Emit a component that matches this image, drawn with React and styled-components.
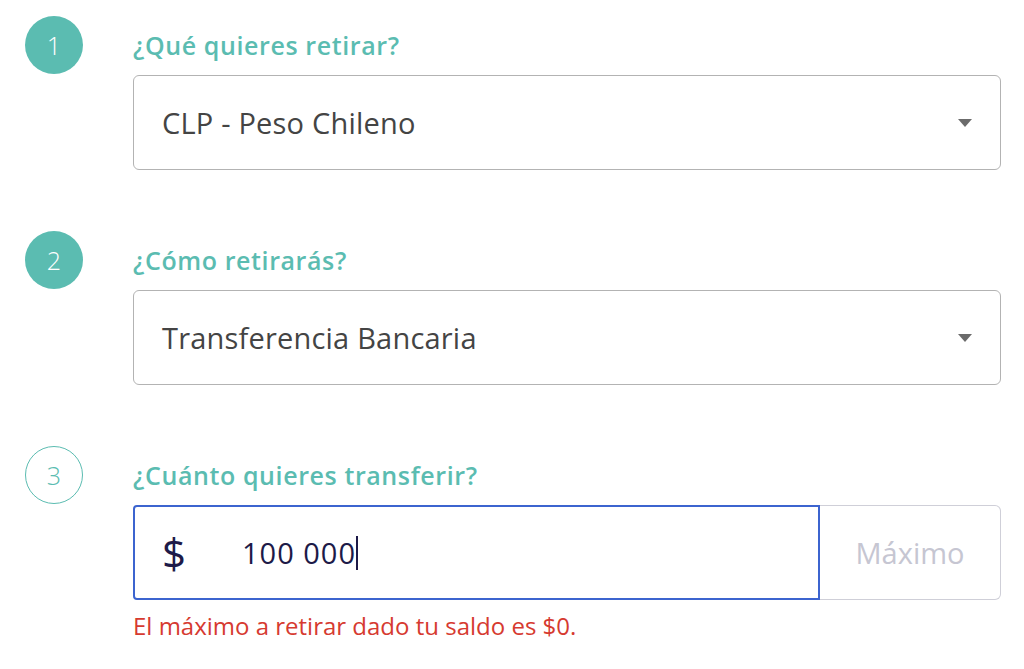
import React from 'react'
import styled, { createGlobalStyle } from 'styled-components';

const GlobalStyle = createGlobalStyle`
  body {
    margin: 0;
    background: #fff;
    font-family: "Open Sans", Lato, sans-serif;
  }
`;

const Page = styled.div`
  padding: 16px 23px 0 25px;
  display: flex;
  flex-direction: column;
  gap: 61px;
`;

const Step = styled.section`
  display: grid;
  grid-template-columns: 58px 1fr;
  column-gap: 50px;
  align-items: start;
`;

const Bullet = styled.div`
  width: 58px;
  height: 58px;
  box-sizing: border-box;
  border-radius: 50%;
  display: flex;
  align-items: center;
  justify-content: center;
  font-size: 25px;
  font-weight: 300;
  background: ${p => (p.$outline ? '#fff' : '#5bbcb1')};
  color: ${p => (p.$outline ? '#5bbcb1' : '#fff')};
  border: ${p => (p.$outline ? '1.5px solid #5bbcb1' : 'none')};
`;

const Body = styled.div`
  display: flex;
  flex-direction: column;
`;

const Label = styled.h2`
  margin: 0 0 1px;
  height: 58px;
  line-height: 58px;
  font-size: 25px;
  letter-spacing: 0.6px;
  font-weight: 600;
  color: #5bbcb1;
`;

const Select = styled.div`
  height: 95px;
  box-sizing: border-box;
  border: 1.5px solid #b3b3b3;
  border-radius: 6px;
  padding: 0 28px;
  display: flex;
  align-items: center;
  justify-content: space-between;
  font-size: 29px;
  letter-spacing: 0.2px;
  color: #444;
  cursor: pointer;
`;

const Caret = styled.span`
  width: 0;
  height: 0;
  border-left: 7px solid transparent;
  border-right: 7px solid transparent;
  border-top: 8px solid #6b6b6b;
`;

const AmountGroup = styled.div`
  display: flex;
  height: 95px;
`;

const AmountBox = styled.div`
  flex: 1;
  box-sizing: border-box;
  border: 2px solid #3c64cf;
  border-radius: 4px 0 0 4px;
  display: flex;
  align-items: center;
  padding-left: 27px;
  color: #1d1a48;
`;

const Currency = styled.span`
  width: 80px;
  font-size: 42px;
  font-weight: 400;
`;

const AmountValue = styled.span`
  font-size: 29px;
  letter-spacing: 1px;
  color: #1d1a48;
  display: flex;
  align-items: center;
`;

const TextCursor = styled.span`
  width: 2px;
  height: 34px;
  background: #1d1a48;
`;

const MaxButton = styled.button`
  width: 181px;
  box-sizing: border-box;
  border: 1.5px solid #cfcfd8;
  border-left: none;
  border-radius: 0 6px 6px 0;
  background: #fff;
  font-family: inherit;
  font-size: 29px;
  color: #c6c6d2;
  cursor: pointer;
`;

const ErrorText = styled.p`
  margin: 12px 0 0;
  font-size: 24px;
  line-height: 28px;
  color: #d63a30;
`;

export default function App() {
  return (
    <>
      <GlobalStyle />
      <Page>
        <Step>
          <Bullet>1</Bullet>
          <Body>
            <Label>¿Qué quieres retirar?</Label>
            <Select>
              CLP - Peso Chileno
              <Caret />
            </Select>
          </Body>
        </Step>
        <Step>
          <Bullet>2</Bullet>
          <Body>
            <Label>¿Cómo retirarás?</Label>
            <Select>
              Transferencia Bancaria
              <Caret />
            </Select>
          </Body>
        </Step>
        <Step>
          <Bullet $outline>3</Bullet>
          <Body>
            <Label>¿Cuánto quieres transferir?</Label>
            <AmountGroup>
              <AmountBox>
                <Currency>$</Currency>
                <AmountValue>
                  100 000
                  <TextCursor />
                </AmountValue>
              </AmountBox>
              <MaxButton>Máximo</MaxButton>
            </AmountGroup>
            <ErrorText>El máximo a retirar dado tu saldo es $0.</ErrorText>
          </Body>
        </Step>
      </Page>
    </>
  );
}
